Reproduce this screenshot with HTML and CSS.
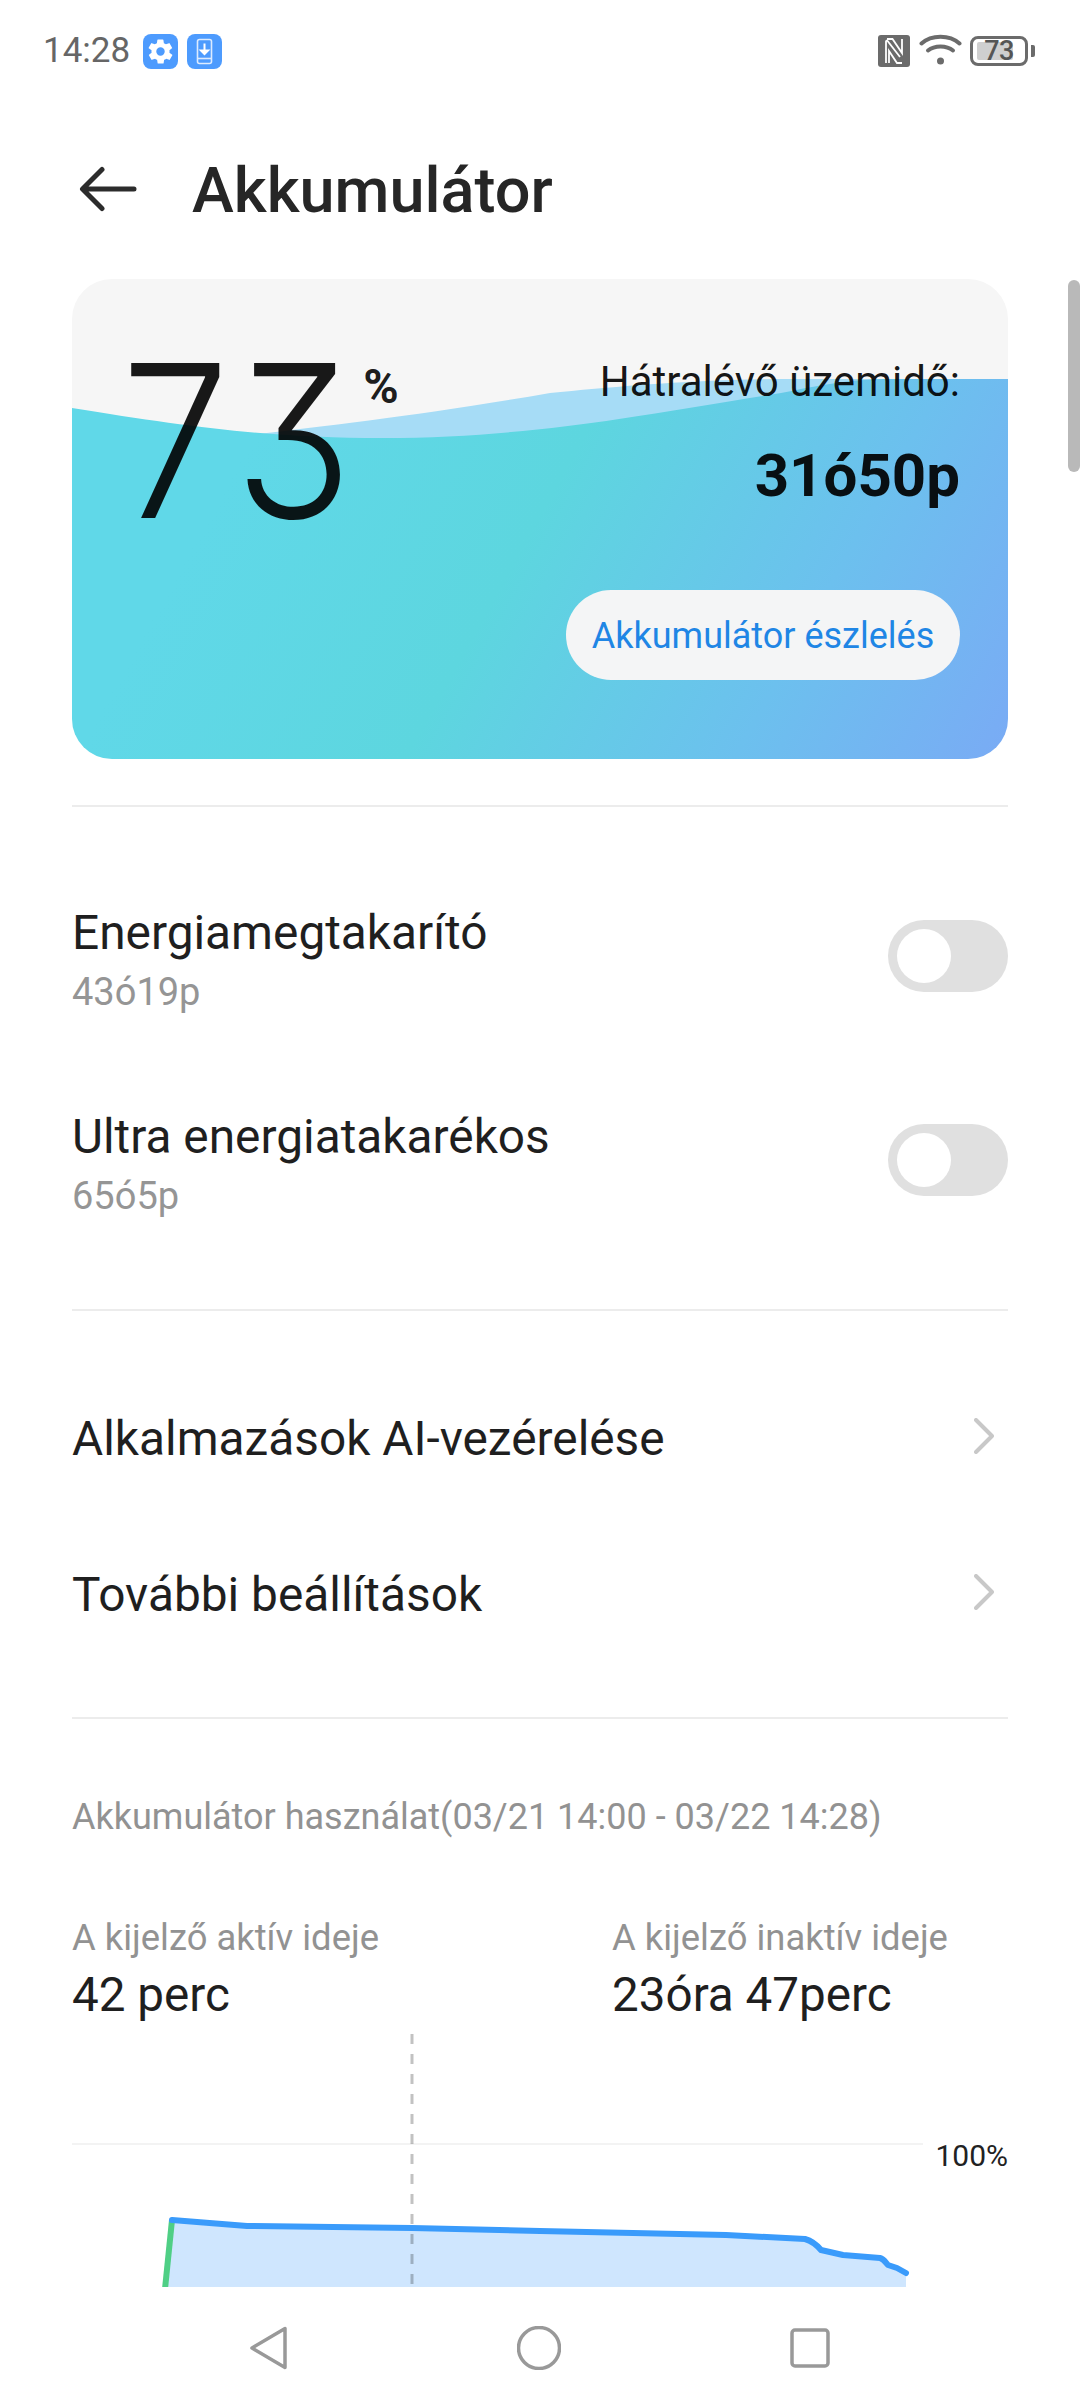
FILE: index.html
```html
<!DOCTYPE html>
<html lang="hu">
<head>
<meta charset="utf-8">
<title>Akkumulátor</title>
<link rel="stylesheet" href="styles.css">
</head>
<body>
<div class="phone">
  <div class="status">
    <div class="status-left">
      <span class="clock">14:28</span>
      <span class="badge">
        <svg viewBox="0 0 24 24" class="badge-svg"><path fill="#fff" d="M19.4 13a7.6 7.6 0 0 0 0-2l2.1-1.6a.5.5 0 0 0 .1-.6l-2-3.5a.5.5 0 0 0-.6-.2l-2.5 1a7.4 7.4 0 0 0-1.7-1l-.4-2.6a.5.5 0 0 0-.5-.5h-4a.5.5 0 0 0-.5.5l-.4 2.6a7.4 7.4 0 0 0-1.7 1l-2.5-1a.5.5 0 0 0-.6.2l-2 3.5a.5.5 0 0 0 .1.6L4.6 11a7.6 7.6 0 0 0 0 2l-2.1 1.6a.5.5 0 0 0-.1.6l2 3.5c.1.2.4.3.6.2l2.5-1c.5.4 1.1.7 1.7 1l.4 2.6c0 .3.2.5.5.5h4c.3 0 .5-.2.5-.5l.4-2.6c.6-.3 1.2-.6 1.7-1l2.5 1c.2.1.5 0 .6-.2l2-3.5a.5.5 0 0 0-.1-.6zM12 15.500a3.500 3.500 0 1 1 0-7 3.500 3.500 0 0 1 0 7z"/></svg>
      </span>
      <span class="badge">
        <svg viewBox="0 0 35 35" class="badge-svg-full"><rect x="10.500" y="5.500" width="14" height="24" rx="2" fill="none" stroke="#dcebff" stroke-width="1.600"/><path d="M10.500 24.500h14" stroke="#dcebff" stroke-width="1.600"/><path d="M17.500 9.500v10M14 16.500l3.500 3.500 3.500-3.500z" stroke="#fff" stroke-width="2" fill="#fff"/></svg>
      </span>
    </div>
    <div class="status-right">
      <svg class="nfc" viewBox="0 0 32 32"><rect width="32" height="32" rx="3" fill="#6b6b6b"/><path d="M8 28V6.500c0-1 1-1.300 1.600-.5L22 22M9 4h5.500L24 18V4M24 28h-5l-8-12v12" fill="none" stroke="#fff" stroke-width="1.800"/></svg>
      <svg class="wifi" viewBox="0 0 43 32"><g fill="none" stroke="#6b6b6b" stroke-width="4" stroke-linecap="round"><path d="M2.500 10.500C12.500 1.500 30.500 1.500 40.500 10.500"/><path d="M9 17.500c6.500-5.500 18.500-5.500 25 0"/></g><circle cx="21.500" cy="28" r="3.500" fill="#6b6b6b"/></svg>
      <span class="battery">
        <span class="battery-fill"></span>
        <span class="battery-num">73</span>
      </span>
      <span class="battery-nub"></span>
    </div>
  </div>

  <header class="header">
    <svg class="back" viewBox="0 0 60 46"><path d="M56 23H5M24 3.500 4.500 23 24 42.500" fill="none" stroke="#2c2c2c" stroke-width="5" stroke-linecap="round" stroke-linejoin="round"/></svg>
    <h1 class="title">Akkumulátor</h1>
  </header>

  <main class="content">
    <section class="card">
      <svg class="waves" viewBox="0 0 936 480" preserveAspectRatio="none">
        <defs>
          <linearGradient id="water" gradientUnits="userSpaceOnUse" x1="180" y1="160" x2="900" y2="560">
            <stop offset="0" stop-color="#60d8e8"/>
            <stop offset="0.35" stop-color="#5dd6df"/>
            <stop offset="0.7" stop-color="#6cc0ee"/>
            <stop offset="1" stop-color="#7aaaf5"/>
          </linearGradient>
        </defs>
        <path fill="#a6dcf6" d="M150 159C230 150 340 138 478 114 540 108 620 100 720 100H936V300H150Z"/>
        <path fill="url(#water)" d="M0 129C118 148 198 159 311 159 400 159 480 150 547 140 600 132 660 122 709 114 745 107 775 100 820 100H936V480H0Z"/>
      </svg>
      <div class="card-body">
        <div class="level">
          <span class="level-num">73</span>
          <span class="level-unit">%</span>
        </div>
        <div class="remain">
          <span class="remain-label">Hátralévő üzemidő:</span>
          <span class="remain-value">31ó50p</span>
          <span class="detect">Akkumulátor észlelés</span>
        </div>
      </div>
    </section>

    <div class="divider first"></div>

    <section class="group-switch">
      <div class="row-switch">
        <div class="row-text">
          <span class="row-title">Energiamegtakarító</span>
          <span class="row-sub">43ó19p</span>
        </div>
        <span class="switch"><span class="thumb"></span></span>
      </div>
      <div class="row-switch">
        <div class="row-text">
          <span class="row-title">Ultra energiatakarékos</span>
          <span class="row-sub">65ó5p</span>
        </div>
        <span class="switch"><span class="thumb"></span></span>
      </div>
    </section>

    <div class="divider"></div>

    <section class="group-link">
      <div class="row-link">
        <span class="row-title link-title">Alkalmazások AI-vezérelése</span>
        <svg class="chev" viewBox="0 0 20 36"><path d="M2 2 18 18 2 34" fill="none" stroke="#c8c8c8" stroke-width="4" stroke-linecap="round" stroke-linejoin="round"/></svg>
      </div>
      <div class="row-link">
        <span class="row-title link-title">További beállítások</span>
        <svg class="chev" viewBox="0 0 20 36"><path d="M2 2 18 18 2 34" fill="none" stroke="#c8c8c8" stroke-width="4" stroke-linecap="round" stroke-linejoin="round"/></svg>
      </div>
    </section>

    <div class="divider"></div>

    <h2 class="usage">Akkumulátor használat(03/21 14:00 - 03/22 14:28)</h2>

    <div class="stats">
      <div class="stat">
        <span class="stat-label">A kijelző aktív ideje</span>
        <span class="stat-value">42 perc</span>
      </div>
      <div class="stat">
        <span class="stat-label">A kijelző inaktív ideje</span>
        <span class="stat-value">23óra 47perc</span>
      </div>
    </div>

    <div class="chart">
      <svg class="chart-svg" viewBox="72 2024 936 264">
        <path d="M72 2145H923" stroke="#f3f3f3" stroke-width="2"/>
        <path fill="#cfe6fe" d="M172 2221 247 2227 412 2229 540 2232 726 2236 805 2240C812 2242 816 2245 821 2251L843 2256 880 2259C884 2260 886 2264 888 2266L897 2269 906 2274V2288H165Z"/>
        <path d="M412 2035V2285" stroke="#000" stroke-opacity=".24" stroke-width="3" stroke-dasharray="10 10"/>
        <path d="M172 2221 165 2290" fill="none" stroke="#4fcf85" stroke-width="6"/>
        <path d="M172 2221 247 2227 412 2229 540 2232 726 2236 805 2240C812 2242 816 2245 821 2251L843 2256 880 2259C884 2260 886 2264 888 2266L897 2269 906 2274" fill="none" stroke="#3a9bfb" stroke-width="6" stroke-linecap="round" stroke-linejoin="round"/>
      </svg>
      <span class="chart-max">100%</span>
    </div>
  </main>

  <nav class="nav">
    <svg class="nav-back" viewBox="0 0 37 44"><path d="M35 2.500V41.500L2 22Z" fill="none" stroke="#999" stroke-width="3.500" stroke-linejoin="round"/></svg>
    <svg class="nav-home" viewBox="0 0 44 44"><circle cx="22" cy="22" r="20.500" fill="none" stroke="#999" stroke-width="3.500"/></svg>
    <svg class="nav-recent" viewBox="0 0 40 40"><rect x="2" y="2" width="36" height="36" rx="3" fill="none" stroke="#999" stroke-width="3.500"/></svg>
  </nav>

  <div class="scrollbar"></div>
</div>
</body>
</html>
```

FILE: styles.css
```css
* { box-sizing: border-box; }
html, body { margin: 0; padding: 0; background: #fff; }
body { font-family: Roboto, "Noto Sans", sans-serif; color: #222; }

.phone {
  position: relative;
  width: 1080px;
  height: 2408px;
  overflow: hidden;
  display: flex;
  flex-direction: column;
  background: #fff;
}

/* status bar */
.status {
  height: 102px;
  flex: none;
  display: flex;
  justify-content: space-between;
  align-items: center;
  padding: 0 45px 0 43px;
}
.status-left { display: flex; align-items: center; }
.clock { font-size: 35px; color: #666; margin-right: 13px; line-height: 40px; }
.badge {
  width: 35px;
  height: 35px;
  margin-right: 9px;
  border-radius: 8px;
  background: #4d9bfe;
  display: flex;
  align-items: center;
  justify-content: center;
}
.badge-svg { width: 29px; height: 29px; }
.badge-svg-full { width: 35px; height: 35px; }
.status-right { display: flex; align-items: center; }
.nfc { width: 32px; height: 32px; margin-right: 9px; }
.wifi { width: 43px; height: 32px; margin-right: 8px; margin-top: -4px; }
.battery {
  position: relative;
  width: 58px;
  height: 30px;
  border: 3px solid #6b6b6b;
  border-radius: 8px;
  display: flex;
  align-items: center;
  justify-content: center;
}
.battery-fill {
  position: absolute;
  left: 4px;
  top: 3px;
  bottom: 3px;
  width: 36px;
  background: #cfcfcf;
  border-radius: 2px;
}
.battery-num {
  position: relative;
  font-size: 27px;
  font-weight: 500;
  line-height: 24px;
  color: #555;
  letter-spacing: -0.5px;
}
.battery-nub {
  width: 4px;
  height: 12px;
  margin-left: 3px;
  background: #6b6b6b;
  border-radius: 0 2px 2px 0;
}

/* header */
.header {
  height: 177px;
  flex: none;
  padding: 0 0 0 80px;
  display: flex;
  align-items: center;
}
.back { width: 60px; height: 46px; flex: none; margin: -3px 0 0 -2px; }
.title {
  margin: 0 0 0 54px;
  font-size: 63px;
  font-weight: 500;
  line-height: 72px;
  color: #262626;
}

/* content */
.content {
  flex: 1;
  min-height: 0;
  padding: 0 72px;
  display: flex;
  flex-direction: column;
}

.card {
  position: relative;
  height: 480px;
  flex: none;
  border-radius: 40px;
  overflow: hidden;
  background: #f6f6f6;
}
.waves { position: absolute; inset: 0; width: 100%; height: 100%; }
.card-body {
  position: relative;
  height: 100%;
  display: flex;
  justify-content: space-between;
  padding: 0 48px 0 49px;
}
.level { display: flex; align-items: flex-start; padding-top: 33px; }
.level-num {
  display: block;
  font-family: Inter, sans-serif;
  font-feature-settings: "cv09" 1;
  font-weight: 300;
  font-size: 213px;
  line-height: 258px;
  letter-spacing: 9px;
  transform: scaleX(0.91);
  transform-origin: left center;
  color: rgba(0, 0, 0, 0.9);
}
.level-unit {
  font-size: 48px;
  font-weight: 700;
  line-height: 54px;
  margin: 48px 0 0 -21px;
  color: rgba(0, 0, 0, 0.9);
}
.remain {
  display: flex;
  flex-direction: column;
  align-items: flex-end;
  padding-top: 82px;
}
.remain-label {
  font-size: 42px;
  line-height: 42px;
  color: rgba(0, 0, 0, 0.92);
}
.remain-value {
  margin-top: 41px;
  font-size: 60px;
  font-weight: 700;
  line-height: 64px;
  color: rgba(0, 0, 0, 0.92);
}
.detect {
  margin-top: 82px;
  width: 394px;
  height: 90px;
  padding-top: 2px;
  border-radius: 45px;
  background: #f4f5f6;
  color: #1f86e5;
  font-size: 36px;
  display: flex;
  align-items: center;
  justify-content: center;
}

.divider { height: 2px; flex: none; background: #ececec; margin-top: 47px; }
.divider.first { margin-top: 46px; }

.group-switch { margin-top: 47px; }
.row-switch {
  height: 204px;
  display: flex;
  justify-content: space-between;
  align-items: center;
}
.row-text { display: flex; flex-direction: column; padding-top: 8px; }
.row-title { font-size: 47.8px; line-height: 56px; color: #1f1f1f; }
.row-sub { margin-top: 7px; font-size: 38px; line-height: 48px; color: #959595; }
.switch {
  width: 120px;
  height: 72px;
  border-radius: 36px;
  background: #e0e0e0;
  padding: 9px;
  flex: none;
}
.thumb { display: block; width: 54px; height: 54px; border-radius: 50%; background: #fff; }

.group-link { margin-top: 47px; }
.row-link {
  height: 156px;
  display: flex;
  justify-content: space-between;
  align-items: center;
}
.link-title { padding-top: 5px; }
.chev { width: 20px; height: 36px; margin-right: 14px; }

.usage {
  margin: 74px 0 0;
  font-size: 36px;
  font-weight: 400;
  line-height: 48px;
  color: #929292;
}
.stats {
  margin-top: 73px;
  display: grid;
  grid-template-columns: 540px 1fr;
}
.stat { display: flex; flex-direction: column; }
.stat-label { font-size: 36.4px; font-weight: 400; line-height: 48px; color: #929292; }
.stat-value { margin-top: 5px; font-size: 47.6px; line-height: 56px; color: #1f1f1f; }

.chart { position: relative; height: 264px; flex: none; }
.chart-svg { display: block; width: 936px; height: 264px; }
.chart-max {
  position: absolute;
  right: 0;
  top: 116px;
  font-size: 30px;
  line-height: 34px;
  color: #222;
}

/* nav */
.nav {
  height: 120px;
  flex: none;
  position: relative;
  display: grid;
  grid-template-columns: 250px 37px 1fr 44px 1fr 40px 250px;
  align-items: start;
  padding-top: 38px;
}
.nav-back { grid-column: 2; width: 37px; height: 44px; }
.nav-home { grid-column: 4; width: 44px; height: 44px; }
.nav-recent { grid-column: 6; width: 40px; height: 40px; margin-top: 2px; }

.scrollbar {
  position: absolute;
  right: 0;
  top: 280px;
  width: 12px;
  height: 192px;
  background: #b9b9b9;
  border-radius: 6px;
}
```
